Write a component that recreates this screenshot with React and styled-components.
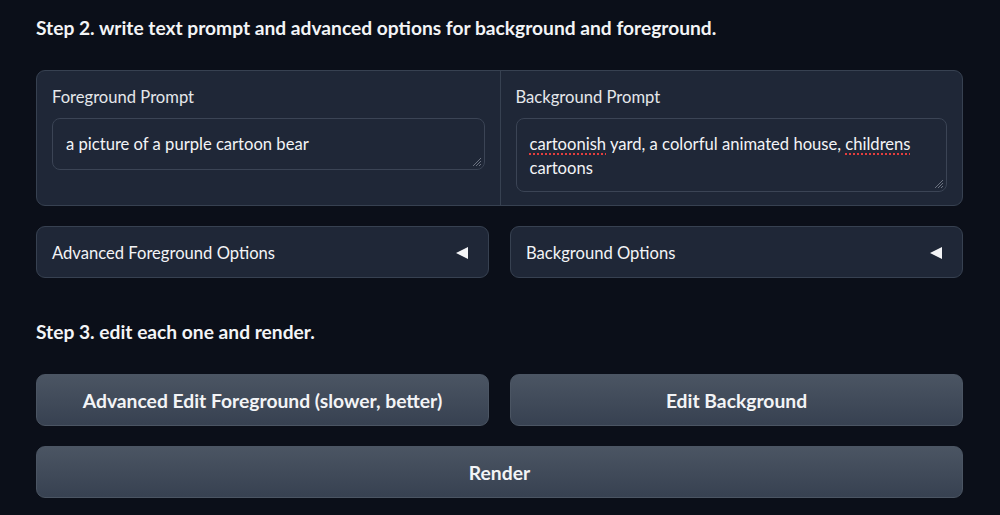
import React from "react";
import styled, { createGlobalStyle } from "styled-components";

const GlobalStyle = createGlobalStyle`
  html, body {
    margin: 0;
    padding: 0;
    background: #0b0f19;
  }
  body {
    font-family: "Lato", "Noto Sans", sans-serif;
    color: #e5e7eb;
  }
`;

const Page = styled.div`
  width: 1000px;
  height: 515px;
  box-sizing: border-box;
  padding: 15px 37px 0 36px;
  display: flex;
  flex-direction: column;
  overflow: hidden;
`;

const Heading = styled.h3`
  margin: 0;
  font-size: 19.2px;
  font-weight: 700;
  color: #f3f4f6;
  line-height: 26px;
  margin-top: ${(p) => p.$top || 0}px;
  margin-bottom: ${(p) => p.$gap || 0}px;
`;

const Panel = styled.div`
  display: grid;
  grid-template-columns: 1fr 1fr;
  background: #1f2737;
  border: 1px solid #374151;
  border-radius: 9px;
  height: 136px;
  box-sizing: border-box;
  overflow: hidden;
`;

const Field = styled.div`
  padding: 16px 15px 0 15px;
  border-left: ${(p) => (p.$divider ? "1px solid #374151" : "none")};
`;

const Label = styled.div`
  font-size: 16.6px;
  color: #e5e7eb;
  line-height: 20px;
  margin-bottom: 11px;
`;

const Box = styled.div`
  position: relative;
  background: #1f2737;
  border: 1px solid #3b4455;
  border-radius: 8px;
  min-height: ${(p) => p.$h}px;
  box-sizing: border-box;
  padding: 13px 13px 8px 13px;
  font-size: 16.6px;
  line-height: 24px;
  color: #f3f4f6;
`;

const Grip = styled.svg`
  position: absolute;
  right: 2px;
  bottom: 2px;
`;

const Squiggle = styled.span`
  text-decoration: underline dotted #e53e3e;
  text-decoration-thickness: 2px;
  text-underline-offset: 3px;
`;

const Row = styled.div`
  display: grid;
  grid-template-columns: 1fr 1fr;
  gap: 21px;
  margin-top: ${(p) => p.$top}px;
`;

const Accordion = styled.div`
  height: 52px;
  box-sizing: border-box;
  background: #1f2737;
  border: 1px solid #374151;
  border-radius: 9px;
  display: flex;
  align-items: center;
  justify-content: space-between;
  padding: 2px 20px 0 15px;
  font-size: 16.6px;
  color: #f3f4f6;
`;

const Arrow = styled.span`
  width: 0;
  height: 0;
  border-top: 6px solid transparent;
  border-bottom: 6px solid transparent;
  border-right: 12px solid #f3f4f6;
`;

const Button = styled.button`
  height: 52px;
  border: 1px solid #4b5563;
  border-radius: 9px;
  background: linear-gradient(to bottom, #4b5563, #374151);
  color: #f3f4f6;
  font-family: "Lato", "Noto Sans", sans-serif;
  font-size: 19.3px;
  font-weight: 700;
  cursor: pointer;
  width: 100%;
`;

const Full = styled.div`
  margin-top: 20px;
  display: flex;
`;

function ResizeGrip() {
  return (
    <Grip width="12" height="12" viewBox="0 0 12 12">
      <path d="M11 3 L3 11 M11 6 L6 11 M11 9 L9 11" stroke="#6b7280" strokeWidth="1" />
    </Grip>
  );
}

export default function App() {
  return (
    <>
      <GlobalStyle />
      <Page>
        <Heading $gap={29}>
          Step 2. write text prompt and advanced options for background and foreground.
        </Heading>
        <Panel>
          <Field>
            <Label>Foreground Prompt</Label>
            <Box $h={52}>
              a picture of a purple cartoon bear
              <ResizeGrip />
            </Box>
          </Field>
          <Field $divider>
            <Label>Background Prompt</Label>
            <Box $h={74}>
              <Squiggle>cartoonish</Squiggle> yard, a colorful animated house,{" "}
              <Squiggle>childrens</Squiggle> cartoons
              <ResizeGrip />
            </Box>
          </Field>
        </Panel>
        <Row $top={20}>
          <Accordion>
            Advanced Foreground Options
            <Arrow />
          </Accordion>
          <Accordion>
            Background Options
            <Arrow />
          </Accordion>
        </Row>
        <Heading $top={41} $gap={29}>
          Step 3. edit each one and render.
        </Heading>
        <Row $top={0}>
          <Button>Advanced Edit Foreground (slower, better)</Button>
          <Button>Edit Background</Button>
        </Row>
        <Full>
          <Button>Render</Button>
        </Full>
      </Page>
    </>
  );
}
